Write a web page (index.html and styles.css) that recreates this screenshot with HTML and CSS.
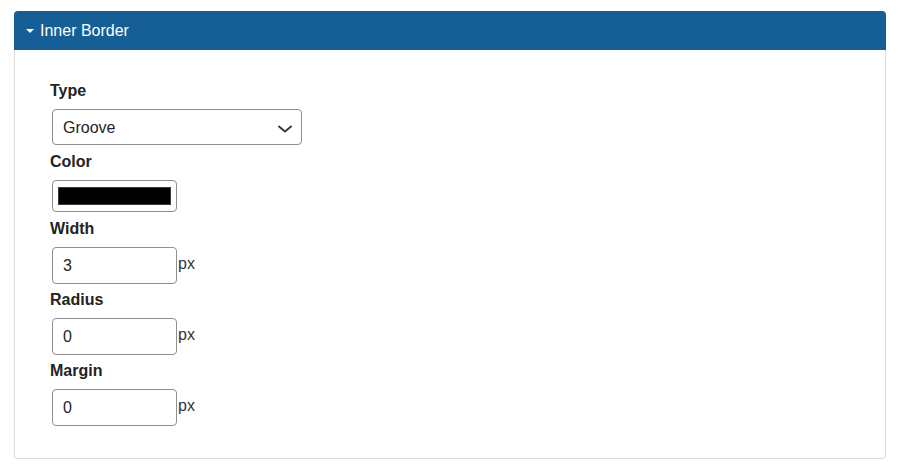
FILE: index.html
```html
<!DOCTYPE html>
<html lang="en">
<head>
<meta charset="utf-8">
<title>Inner Border</title>
<link rel="stylesheet" href="styles.css">
</head>
<body>
<div class="panel">
  <div class="panel-header">
    <span class="caret"></span>
    <span class="panel-title">Inner Border</span>
  </div>
  <div class="panel-body">
    <div class="field field-wide">
      <label class="field-label" for="type">Type</label>
      <div class="select-wrap">
        <select id="type" class="select">
          <option>Groove</option>
          <option>Solid</option>
          <option>Dashed</option>
          <option>Dotted</option>
        </select>
        <svg class="chevron" width="16" height="10" viewBox="0 0 16 10" aria-hidden="true"><polyline points="2,2.5 8,7.5 14,2.5" fill="none" stroke="#3a3a3a" stroke-width="2" stroke-linecap="round" stroke-linejoin="round"/></svg>
      </div>
    </div>
    <div class="field field-wide">
      <label class="field-label" for="color">Color</label>
      <input id="color" class="color-input" type="color" value="#000000">
    </div>
    <div class="field field-number">
      <label class="field-label" for="width">Width</label>
      <div class="input-row">
        <input id="width" class="text-input" type="text" value="3">
        <span class="unit">px</span>
      </div>
    </div>
    <div class="field field-number">
      <label class="field-label" for="radius">Radius</label>
      <div class="input-row">
        <input id="radius" class="text-input" type="text" value="0">
        <span class="unit">px</span>
      </div>
    </div>
    <div class="field field-number">
      <label class="field-label" for="margin">Margin</label>
      <div class="input-row">
        <input id="margin" class="text-input" type="text" value="0">
        <span class="unit">px</span>
      </div>
    </div>
  </div>
</div>
</body>
</html>
```
FILE: styles.css
```css
html, body {
  margin: 0;
  padding: 0;
  background: #ffffff;
}

body {
  padding: 11px 14px;
  font-family: "Liberation Sans", Arial, sans-serif;
  font-size: 16px;
  line-height: 24px;
  color: #212529;
}

.panel {
  display: flex;
  flex-direction: column;
}

.panel-header {
  display: flex;
  align-items: center;
  height: 39px;
  padding-left: 12px;
  background: #155e96;
  color: #ffffff;
  border-radius: 4px 4px 0 0;
}

.caret {
  width: 0;
  height: 0;
  border-left: 4px solid transparent;
  border-right: 4px solid transparent;
  border-top: 4px solid #ffffff;
  margin-right: 6px;
}

.panel-title {
  font-size: 16px;
  line-height: 24px;
}

.panel-body {
  display: flex;
  flex-direction: column;
  padding: 29px 35px 28px;
  border: 1px solid #dcdcdc;
  border-top: none;
  border-radius: 0 0 4px 4px;
}

.field {
  display: flex;
  flex-direction: column;
  align-items: flex-start;
}

.field-wide {
  margin-bottom: 5px;
}

.field-number {
  margin-bottom: 4px;
}

.field-label {
  font-weight: bold;
  font-size: 16px;
  line-height: 24px;
  color: #232323;
  margin-bottom: 6px;
}

.select-wrap {
  position: relative;
  margin-left: 2px;
}

.select {
  -webkit-appearance: none;
  appearance: none;
  box-sizing: border-box;
  width: 250px;
  height: 36px;
  margin: 0;
  padding: 0 36px 0 10px;
  border: 1px solid #8f8f8f;
  border-radius: 4px;
  background: #ffffff;
  font-family: "Liberation Sans", Arial, sans-serif;
  font-size: 16px;
  color: #212529;
}

.chevron {
  position: absolute;
  right: 9px;
  top: 15px;
  pointer-events: none;
}

.color-input {
  box-sizing: border-box;
  width: 125px;
  height: 32px;
  margin: 0 0 0 2px;
  padding: 0;
  border: 1px solid #8f8f8f;
  border-radius: 4px;
  background: #ffffff;
  cursor: pointer;
}

.color-input::-webkit-color-swatch-wrapper {
  padding: 6px 5px;
}

.color-input::-webkit-color-swatch {
  border: 1px solid #3a3a3a;
  border-radius: 0;
}

.input-row {
  display: flex;
  align-items: flex-start;
  margin-left: 2px;
}

.text-input {
  box-sizing: border-box;
  width: 125px;
  height: 37px;
  margin: 0;
  padding: 0 10px;
  border: 1px solid #8f8f8f;
  border-radius: 4px;
  background: #ffffff;
  font-family: "Liberation Sans", Arial, sans-serif;
  font-size: 16px;
  color: #212529;
}

.unit {
  margin-top: 5px;
  margin-left: 1px;
  font-size: 16px;
  line-height: 24px;
  color: #333333;
}
```
